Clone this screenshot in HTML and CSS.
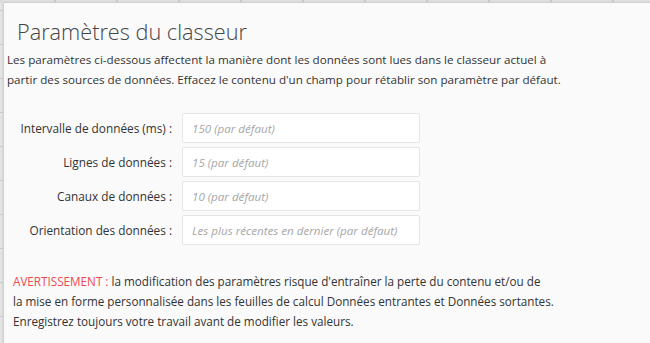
FILE: index.html
```html
<!DOCTYPE html>
<html lang="fr">
<head>
<meta charset="utf-8">
<title>Paramètres du classeur</title>
<link rel="stylesheet" href="styles.css">
</head>
<body>
<div class="sheet">
  <div class="corner"></div>
  <div class="col-headers"></div>
  <div class="row-headers"></div>
  <main class="panel">
    <h1 class="title">Paramètres du classeur</h1>
    <p class="intro">Les paramètres ci-dessous affectent la manière dont les données sont lues dans le classeur actuel à partir des sources de données. Effacez le contenu d'un champ pour rétablir son paramètre par défaut.</p>
    <form class="form">
      <label class="label" for="f1">Intervalle de données (ms) :</label>
      <input class="field" id="f1" type="text" placeholder="150 (par défaut)">
      <label class="label" for="f2">Lignes de données :</label>
      <input class="field" id="f2" type="text" placeholder="15 (par défaut)">
      <label class="label" for="f3">Canaux de données :</label>
      <input class="field" id="f3" type="text" placeholder="10 (par défaut)">
      <label class="label" for="f4">Orientation des données :</label>
      <input class="field" id="f4" type="text" placeholder="Les plus récentes en dernier (par défaut)">
    </form>
    <p class="warning"><span class="warn-label">AVERTISSEMENT :</span> la modification des paramètres risque d'entraîner la perte du contenu et/ou de<br>la mise en forme personnalisée dans les feuilles de calcul Données entrantes et Données sortantes.<br>Enregistrez toujours votre travail avant de modifier les valeurs.</p>
  </main>
</div>
</body>
</html>
```

FILE: styles.css
```css
html, body {
  margin: 0;
  padding: 0;
  background: #fafafa;
}

body {
  width: 650px;
  height: 343px;
  overflow: hidden;
  font-family: "Open Sans", "Noto Sans", sans-serif;
  color: #333;
}

.sheet {
  display: grid;
  grid-template-columns: 4px 1fr;
  grid-template-rows: 3px 1fr;
  height: 343px;
}

.corner {
  background: #dcdcdc;
}

.col-headers {
  background:
    repeating-linear-gradient(to right, transparent 0 59px, #c8c8c8 59px 61px, transparent 61px 62px),
    linear-gradient(#e4e4e4, #d6d6d6);
  background-position: -9px 0, 0 0;
  border-bottom: 1px solid #d0d0d0;
}

.row-headers {
  background:
    repeating-linear-gradient(to bottom, transparent 0 33px, #c8c8c8 33px 34px),
    linear-gradient(to right, #e8e8e8, #d8d8d8);
  background-position: 0 8px, 0 0;
  border-right: 1px solid #d0d0d0;
}

.panel {
  background: #fafafa;
  padding: 0 0 0 3px;
}

.title {
  margin: 14px 0 0 10px;
  font-family: "Open Sans", sans-serif;
  font-weight: 300;
  font-size: 21.7px;
  line-height: 30px;
  color: #444;
}

.intro {
  margin: 3px 0 0 0;
  font-size: 11.65px;
  line-height: 20px;
  width: 570px;
}

.form {
  display: grid;
  grid-template-columns: 165px 238px;
  column-gap: 10px;
  row-gap: 4px;
  align-items: center;
  margin: 23px 0 0 0;
}

.label {
  text-align: right;
  font-size: 11.8px;
}

.field {
  box-sizing: border-box;
  height: 30px;
  width: 238px;
  margin: 0;
  padding: 0 9px;
  border: 1px solid #e6e6e6;
  border-radius: 2px;
  background: #fff;
  font-family: "Open Sans", sans-serif;
  font-size: 11.6px;
  font-style: italic;
  color: #333;
  outline: none;
}

.field::placeholder {
  color: #a6a6a6;
  font-style: italic;
}

.warning {
  margin: 26px 0 0 6px;
  font-size: 11.7px;
  line-height: 20px;
}

.warn-label {
  color: #f0484e;
}
```
